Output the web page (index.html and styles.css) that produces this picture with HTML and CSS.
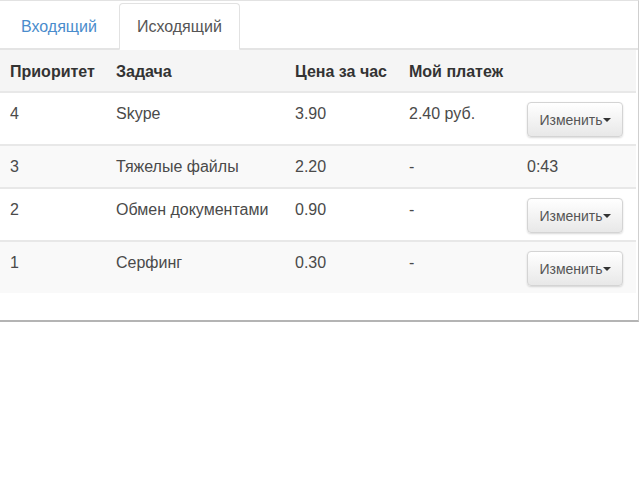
FILE: index.html
```html
<!DOCTYPE html>
<html lang="ru">
<head>
<meta charset="utf-8">
<link rel="stylesheet" href="styles.css">
</head>
<body>
<div class="panel">
  <ul class="tabs">
    <li class="tab"><a class="tab-link">Входящий</a></li>
    <li class="tab active"><a class="tab-link">Исходящий</a></li>
  </ul>
  <table class="grid">
    <thead>
      <tr>
        <th class="c1">Приоритет</th>
        <th class="c2">Задача</th>
        <th class="c3">Цена за час</th>
        <th class="c4">Мой платеж</th>
        <th class="c5"></th>
      </tr>
    </thead>
    <tbody>
      <tr>
        <td>4</td><td>Skype</td><td>3.90</td><td>2.40 руб.</td>
        <td><button class="btn">Изменить<span class="caret"></span></button></td>
      </tr>
      <tr class="odd">
        <td>3</td><td>Тяжелые файлы</td><td>2.20</td><td>-</td><td>0:43</td>
      </tr>
      <tr>
        <td>2</td><td>Обмен документами</td><td>0.90</td><td>-</td>
        <td><button class="btn">Изменить<span class="caret"></span></button></td>
      </tr>
      <tr class="odd">
        <td>1</td><td>Серфинг</td><td>0.30</td><td>-</td>
        <td><button class="btn">Изменить<span class="caret"></span></button></td>
      </tr>
    </tbody>
  </table>
  <div class="footer-space"></div>
</div>
</body>
</html>
```
FILE: styles.css
```css
html, body {
  margin: 0;
  padding: 0;
  background: #fff;
}
body {
  font-family: "Liberation Sans", Arial, sans-serif;
  font-size: 16px;
  line-height: 20px;
  color: #4a4a4a;
}
.panel {
  width: 638px;
  border-top: 1px solid #e2e2e2;
  border-right: 1px solid #cfcfcf;
  border-bottom: 2px solid #b4b4b4;
}
.tabs {
  list-style: none;
  margin: 0;
  padding: 2px 0 0 3px;
  display: flex;
  border-bottom: 2px solid #e4e4e4;
}
.tab {
  margin-right: 4px;
  margin-bottom: -2px;
}
.tab-link {
  display: block;
  padding: 13px 17px 12px;
  color: #4a8ccc;
  border: 1px solid transparent;
  border-radius: 4px 4px 0 0;
}
.tab.active .tab-link {
  color: #555;
  background: #fff;
  border-color: #e2e2e2;
  border-bottom-color: #fff;
}
.grid {
  width: 636px;
  border-collapse: collapse;
}
.grid th,
.grid td {
  text-align: left;
  vertical-align: top;
  padding: 11px 10px 10px;
  border-top: 2px solid #e8e8e8;
}
.grid thead th {
  border-top: none;
  background: #f5f5f5;
  font-weight: bold;
  color: #333;
  padding: 12px 10px 9px;
}
.grid tbody tr.odd td {
  background: #f9f9f9;
}
.c1 { width: 86px; }
.c2 { width: 159px; }
.c3 { width: 94px; }
.c4 { width: 98px; }
.grid td .btn {
  margin-top: -2px;
}
.btn {
  font-family: "Liberation Sans", Arial, sans-serif;
  font-size: 14px;
  color: #555;
  height: 35px;
  width: 96px;
  padding: 0 6px;
  margin-bottom: -3px;
  border: 1px solid #d4d4d4;
  border-radius: 4px;
  background: linear-gradient(#ffffff, #e8e8e8);
  box-shadow: 0 1px 2px rgba(0, 0, 0, 0.15);
  display: inline-flex;
  align-items: center;
  justify-content: center;
}
.caret {
  display: inline-block;
  width: 0;
  height: 0;
  margin-left: 0;
  border-top: 4px solid #333;
  border-left: 4px solid transparent;
  border-right: 4px solid transparent;
}
.footer-space {
  height: 27px;
}
```
